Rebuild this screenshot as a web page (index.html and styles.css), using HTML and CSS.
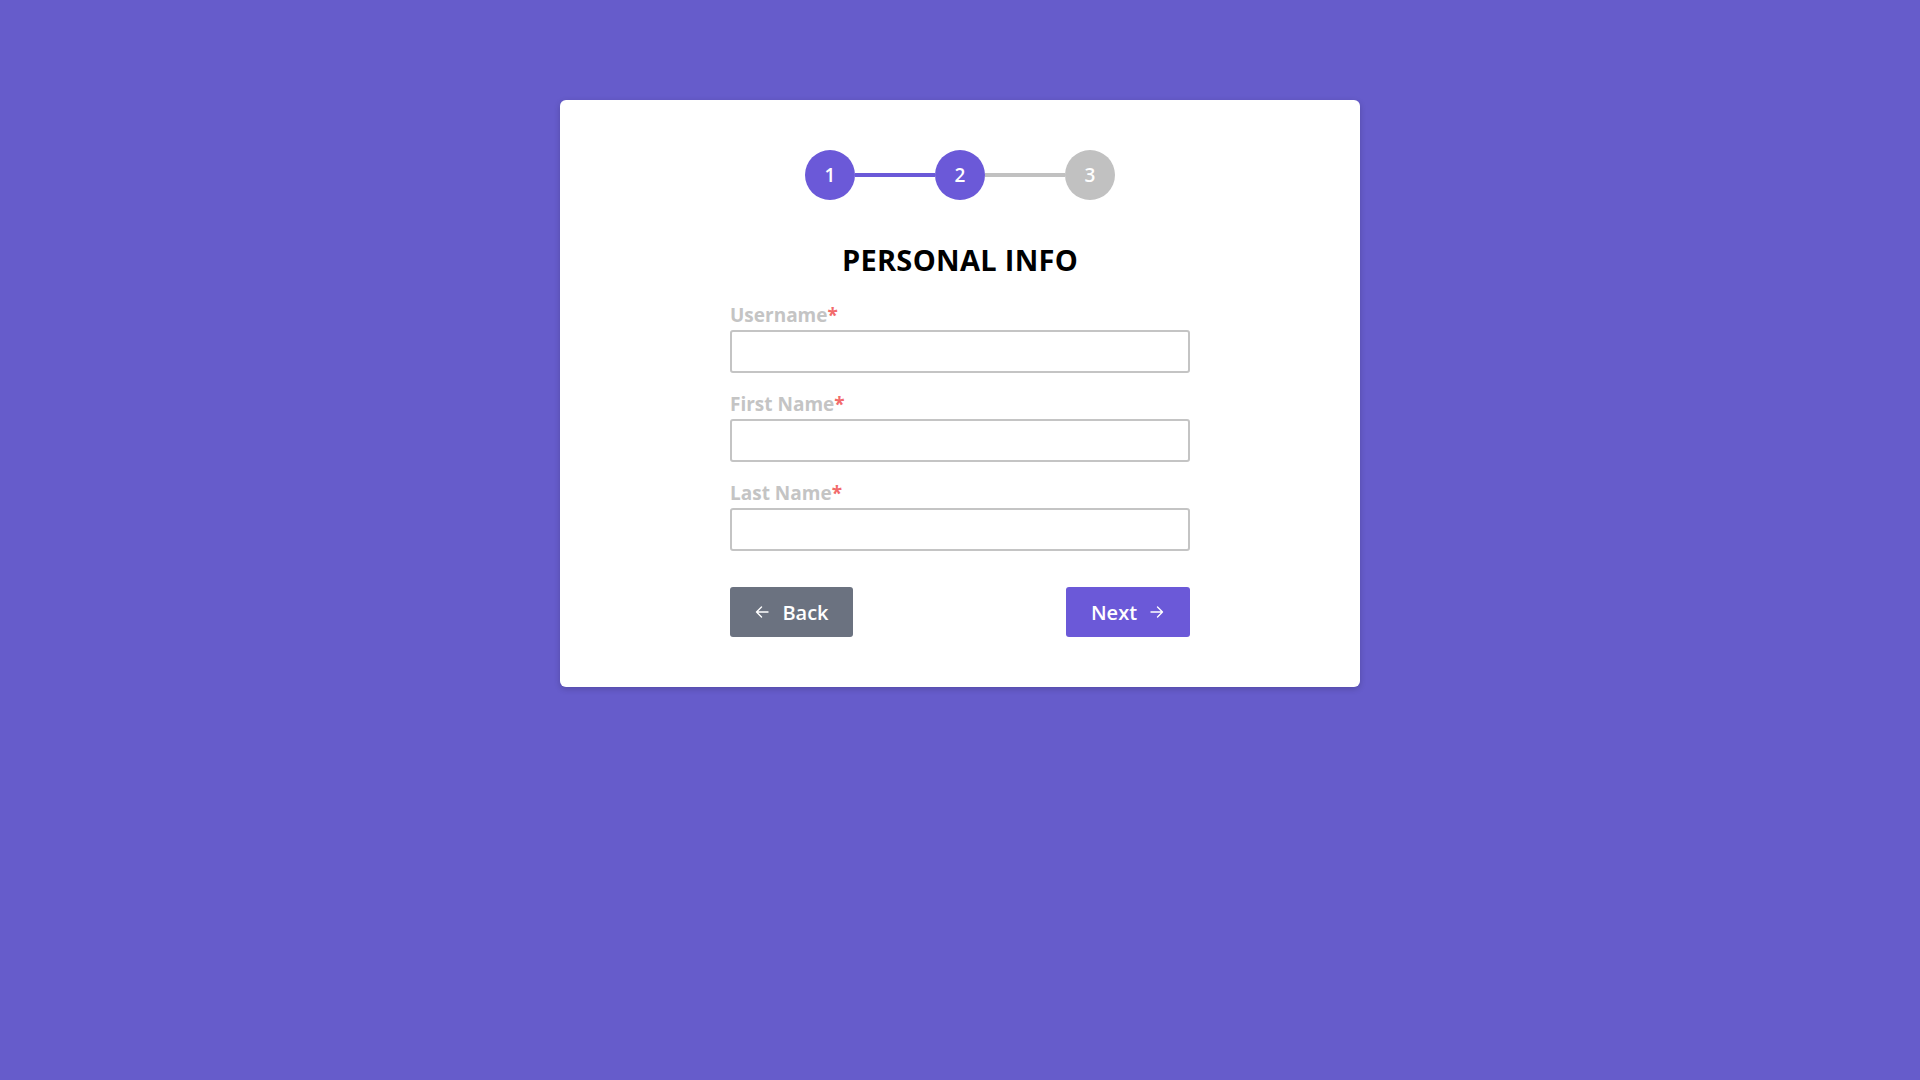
FILE: index.html
```html
<!DOCTYPE html>
<html lang="en">
<head>
<meta charset="utf-8">
<title>Personal Info</title>
<link rel="stylesheet" href="styles.css">
</head>
<body>
<main class="card">
  <div class="steps">
    <span class="step active">1</span>
    <span class="bar active"></span>
    <span class="step active">2</span>
    <span class="bar"></span>
    <span class="step">3</span>
  </div>
  <h1 class="title">PERSONAL INFO</h1>
  <form class="form">
    <div class="field">
      <label class="label">Username<span class="req">*</span></label>
      <input class="input" type="text">
    </div>
    <div class="field">
      <label class="label">First Name<span class="req">*</span></label>
      <input class="input" type="text">
    </div>
    <div class="field">
      <label class="label">Last Name<span class="req">*</span></label>
      <input class="input" type="text">
    </div>
    <div class="actions">
      <button type="button" class="btn btn-back">
        <svg class="ico" viewBox="0 0 16 16" width="16" height="16"><path d="M14 8H2.5M7.5 3L2.5 8l5 5" fill="none" stroke="currentColor" stroke-width="1.4" stroke-linecap="round" stroke-linejoin="round"/></svg>
        <span>Back</span>
      </button>
      <button type="button" class="btn btn-next">
        <span>Next</span>
        <svg class="ico" viewBox="0 0 16 16" width="16" height="16"><path d="M2 8h11.5M8.5 3l5 5-5 5" fill="none" stroke="currentColor" stroke-width="1.4" stroke-linecap="round" stroke-linejoin="round"/></svg>
      </button>
    </div>
  </form>
</main>
</body>
</html>
```

FILE: styles.css
```css
* { box-sizing: border-box; }
html, body { margin: 0; padding: 0; }
body {
  background: #665ccb;
  min-height: 1080px;
  font-family: "Open Sans", "Noto Sans", sans-serif;
  display: flex;
  flex-direction: column;
  align-items: center;
}
.card {
  margin-top: 100px;
  width: 800px;
  background: #fff;
  border-radius: 6px;
  box-shadow: 0 2px 6px rgba(0,0,0,0.18);
  padding: 50px 0 50px;
  display: flex;
  flex-direction: column;
  align-items: center;
}
.steps {
  display: flex;
  align-items: center;
}
.step {
  width: 50px;
  height: 50px;
  border-radius: 50%;
  background: #c1c1c1;
  color: #fff;
  font-size: 19px;
  font-weight: 600;
  display: flex;
  align-items: center;
  justify-content: center;
}
.step.active { background: #6b59d8; }
.bar {
  width: 80px;
  height: 4px;
  background: #c1c1c1;
}
.bar.active { background: #6b59d8; }
.title {
  margin: 40px 0 0;
  font-size: 29px;
  line-height: 40px;
  font-weight: 700;
  letter-spacing: 0.3px;
  color: #000;
}
.form {
  width: 460px;
  margin-top: 22px;
  display: flex;
  flex-direction: column;
}
.field {
  display: flex;
  flex-direction: column;
  margin-bottom: 18px;
}
.label {
  font-size: 19px;
  line-height: 26px;
  font-weight: 700;
  color: #c4c4c4;
  margin-bottom: 2px;
}
.req { color: #f26b6b; }
.input {
  height: 43px;
  border: 2px solid #c4c4c4;
  border-radius: 3px;
  font: inherit;
  padding: 0 10px;
  outline: none;
}
.actions {
  display: flex;
  justify-content: space-between;
  margin-top: 18px;
}
.btn {
  height: 50px;
  border: none;
  border-radius: 3px;
  color: #fff;
  font-family: inherit;
  font-size: 20px;
  font-weight: 600;
  display: flex;
  align-items: center;
  justify-content: center;
  gap: 12px;
  cursor: pointer;
}
.btn-back { width: 123px; background: #6b7280; }
.btn-next { width: 124px; background: #6b59d8; }
.ico { display: block; }
```
